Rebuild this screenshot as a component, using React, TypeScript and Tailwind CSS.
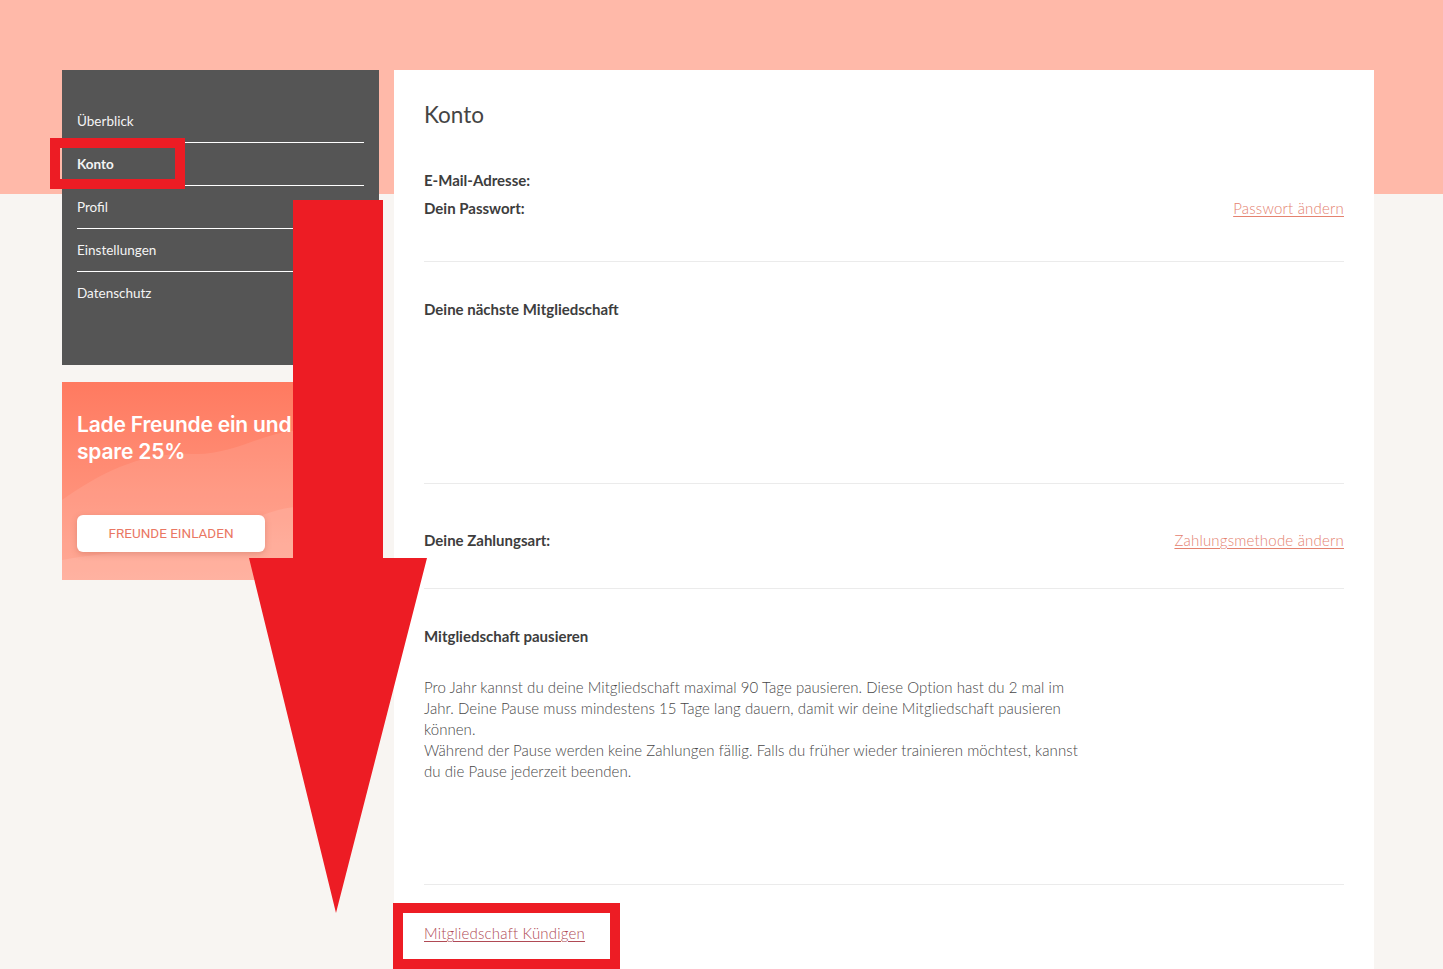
import React from "react";

// Sidebar navigation entries
const navItems = [
  { label: "Überblick", active: false },
  { label: "Konto", active: true },
  { label: "Profil", active: false },
  { label: "Einstellungen", active: false },
  { label: "Datenschutz", active: false },
];

const Sidebar = () => (
  <aside className="flex w-[317px] shrink-0 flex-col gap-[17px]">
    <nav className="h-[295px] bg-[#555555] px-[15px] pt-[30px]">
      {navItems.map((item, index) => (
        <div
          key={item.label}
          className={`flex h-[43px] items-center text-[13.5px] text-[#f4f4f4] ${
            index < navItems.length - 1 ? "border-b border-white" : ""
          } ${item.active ? "font-bold" : ""}`}
        >
          {item.label}
        </div>
      ))}
    </nav>

    {/* Invite friends card */}
    <div className="relative h-[198px] overflow-hidden bg-[linear-gradient(to_bottom,#ff7a60,#ffa28d)] px-[15px] pt-[29px]">
      <svg className="absolute inset-0 h-full w-full" viewBox="0 0 317 198" preserveAspectRatio="none">
        <path d="M0 118 C40 90 80 70 130 72 C180 74 210 40 260 50 C290 56 305 70 317 80 L317 198 L0 198 Z" fill="#ffffff" fillOpacity="0.09" />
        <path d="M0 178 C50 168 110 170 160 150 C200 134 220 120 260 126 C290 130 305 140 317 150 L317 198 L0 198 Z" fill="#ffffff" fillOpacity="0.1" />
      </svg>
      <div className="relative">
        <h2 className="font-['Inter',sans-serif] text-[21px] font-semibold leading-[27px] tracking-[-0.2px] text-white">
          Lade Freunde ein und
          <br />
          spare 25%
        </h2>
        <button className="mt-[50px] flex h-[37px] w-[188px] items-center justify-center rounded-[6px] bg-white font-['Roboto',sans-serif] text-[13.5px] text-[#ea7763] shadow-[0_2px_6px_rgba(150,60,40,0.25)]">
          FREUNDE EINLADEN
        </button>
      </div>
    </div>
  </aside>
);

const Divider = () => <div className="h-px bg-[#ebebeb]" />;

const AccountPanel = () => (
  <main className="min-h-[899px] w-[980px] shrink-0 bg-white px-[30px] pt-[31px] text-[#3d3d3d]">
    <h1 className="text-[22.5px] leading-[28px] text-[#454545]">Konto</h1>

    {/* Login data */}
    <div className="mt-[41px] flex flex-col gap-[8px] text-[15px] leading-[20px]">
      <div className="font-bold">E-Mail-Adresse:</div>
      <div className="flex items-center justify-between">
        <span className="font-bold">Dein Passwort:</span>
        <a href="#" className="font-light tracking-[0.2px] text-[#e4826f] underline underline-offset-2">
          Passwort ändern
        </a>
      </div>
    </div>
    <div className="mt-[43px]">
      <Divider />
    </div>

    {/* Next membership */}
    <div className="mt-[37px] h-[184px] text-[15px] font-bold leading-[20px]">
      Deine nächste Mitgliedschaft
    </div>
    <Divider />

    {/* Payment */}
    <div className="mt-[46px] flex items-center justify-between text-[15px] leading-[20px]">
      <span className="font-bold">Deine Zahlungsart:</span>
      <a href="#" className="font-light tracking-[0.2px] text-[#e4826f] underline underline-offset-2">
        Zahlungsmethode ändern
      </a>
    </div>
    <div className="mt-[38px]">
      <Divider />
    </div>

    {/* Pause membership */}
    <div className="mt-[37px] text-[15px] font-bold leading-[20px]">Mitgliedschaft pausieren</div>
    <p className="mt-[31px] text-[15px] font-light leading-[21px] tracking-[0.05px] text-[#474747]">
      Pro Jahr kannst du deine Mitgliedschaft maximal 90 Tage pausieren. Diese Option hast du 2 mal im
      <br />
      Jahr. Deine Pause muss mindestens 15 Tage lang dauern, damit wir deine Mitgliedschaft pausieren
      <br />
      können.
      <br />
      Während der Pause werden keine Zahlungen fällig. Falls du früher wieder trainieren möchtest, kannst
      <br />
      du die Pause jederzeit beenden.
    </p>
    <div className="mt-[102px]">
      <Divider />
    </div>

    <div className="mt-[38px] text-[15px] leading-[20px]">
      <a href="#" className="font-light tracking-[0.2px] text-[#b04a55] underline underline-offset-2">
        Mitgliedschaft Kündigen
      </a>
    </div>
  </main>
);

export default function App() {
  return (
    <div className="relative min-h-[969px] overflow-hidden bg-[linear-gradient(to_bottom,#ffb9a9_194px,#f8f5f2_194px)] font-['Lato',sans-serif]">
      <div className="flex gap-[15px] pl-[62px] pt-[70px]">
        <Sidebar />
        <AccountPanel />
      </div>

      {/* Annotation overlays */}
      <div className="pointer-events-none absolute left-[50px] top-[138px] h-[51px] w-[135px] border-[10px] border-[#ed1c24]" />
      <div className="pointer-events-none absolute left-[393px] top-[903px] h-[66px] w-[227px] border-[10px] border-[#ed1c24]" />
      <svg className="pointer-events-none absolute left-0 top-0" width="1443" height="969" viewBox="0 0 1443 969">
        <polygon points="293,200 383,200 383,558 427,558 336,913 249,558 293,558" fill="#ed1c24" />
      </svg>
    </div>
  );
}
